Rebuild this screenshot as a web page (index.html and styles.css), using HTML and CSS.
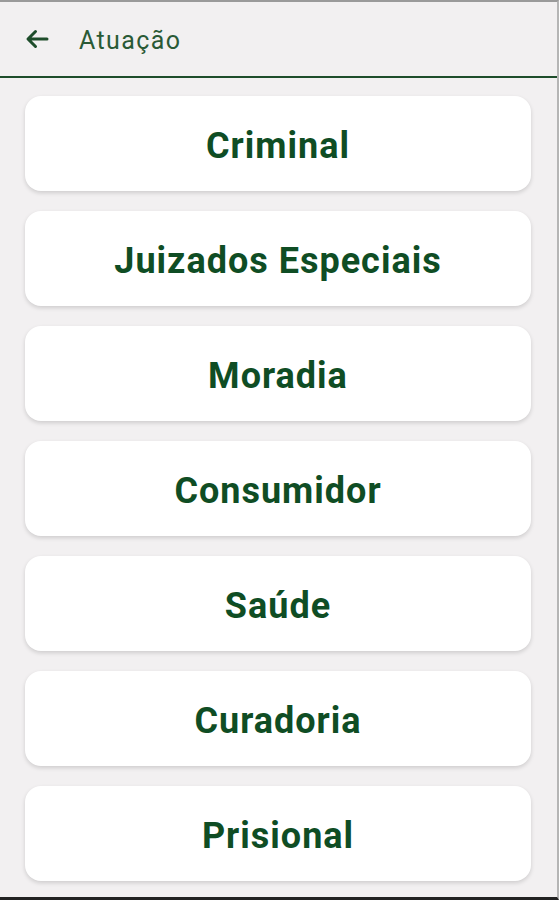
FILE: index.html
```html
<!DOCTYPE html>
<html lang="pt">
<head>
  <meta charset="UTF-8" />
  <meta name="viewport" content="width=device-width, initial-scale=1.0"/>
  <title>Atuação</title>
  <link rel="stylesheet" href="styles.css">
</head>
<body>
  <header class="topbar">
    <a class="back" href="#">
      <svg width="24" height="20" viewBox="0 0 24 20">
        <path d="M22 10H3.5M10.5 2.5L3 10l7.5 7.5" fill="none" stroke="#1e4d2b" stroke-width="3" stroke-linecap="round" stroke-linejoin="round"/>
      </svg>
    </a>
    <span class="title">Atuação</span>
  </header>

  <main class="list">
    <a class="card" href="#">Criminal</a>
    <a class="card" href="#">Juizados Especiais</a>
    <a class="card" href="#">Moradia</a>
    <a class="card" href="#">Consumidor</a>
    <a class="card" href="#">Saúde</a>
    <a class="card" href="#">Curadoria</a>
    <a class="card" href="#">Prisional</a>
  </main>
</body>
</html>
```

FILE: styles.css
```css
html, body {
  height: 100%;
}

body {
  font-family: Roboto, 'Noto Sans', sans-serif;
  margin: 0;
  padding: 0;
  background: #f2f0f1;
  border-top: 2px solid #9a9a9a;
  border-bottom: 3px solid #222;
  border-right: 2px solid #b5b5b5;
  box-sizing: border-box;
  overflow: hidden;
}

.topbar {
  display: flex;
  align-items: center;
  height: 74px;
  padding: 0 0 0 25px;
  border-bottom: 2px solid #1e4d2b;
}

.back {
  display: flex;
  width: 24px;
  height: 20px;
}

.title {
  margin-left: 30px;
  font-size: 25px;
  letter-spacing: 1.4px;
  color: #2a5a36;
  margin-top: 2px;
}

.list {
  display: flex;
  flex-direction: column;
  gap: 20px;
  padding: 18px 26px 0 25px;
}

.card {
  display: flex;
  align-items: center;
  justify-content: center;
  height: 95px;
  background: #fff;
  border-radius: 16px;
  box-shadow: 0 2px 4px rgba(0,0,0,0.15);
  font-size: 36px;
  font-weight: 700;
  letter-spacing: 1px;
  color: #0f4d24;
  text-decoration: none;
  padding-top: 4px;
  box-sizing: border-box;
}
```
